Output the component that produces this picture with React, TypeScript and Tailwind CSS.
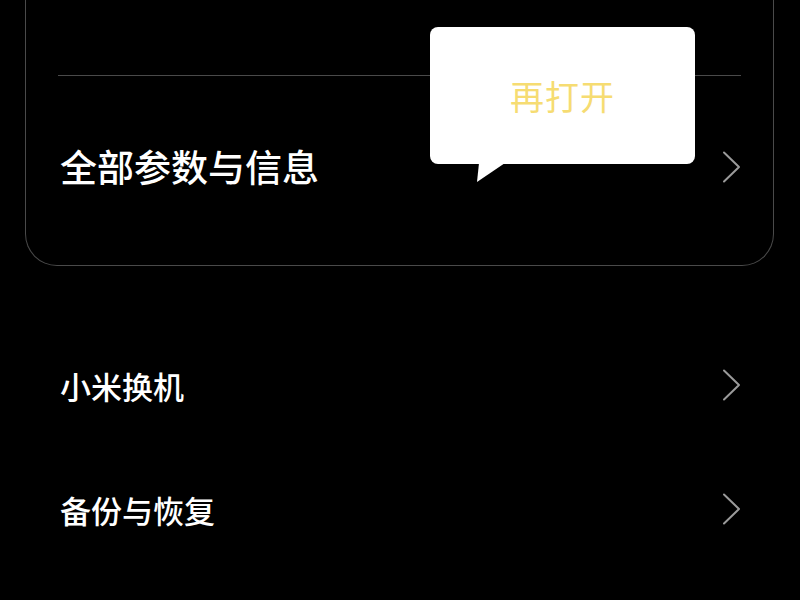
import React from 'react';

const FONT = { fontFamily: '"Noto Sans CJK SC", "Noto Sans", sans-serif' };

const Chevron = () => (
  <svg width="19" height="32" viewBox="0 0 19 32" className="shrink-0">
    <polyline points="2,1.5 17,16 2,30.5" fill="none" stroke="#9a9a9a" strokeWidth="2" strokeLinecap="round" strokeLinejoin="round" />
  </svg>
);

const ListRow = ({ label }: { label: string }) => (
  <div className="h-[124px] flex items-center justify-between pl-[60px] pr-[59px]">
    <span className="text-[31px] font-medium text-white leading-none">{label}</span>
    <Chevron />
  </div>
);

export default function App() {
  return (
    <div className="relative w-[800px] h-[600px] bg-black overflow-hidden" style={FONT}>
      {/* Card, top part runs off the screen */}
      <div className="ml-[25px] w-[749px] border border-t-0 border-[#4a4a4a] rounded-b-[32px]">
        <div className="h-[75px]" />
        <div className="mx-[32px] h-px bg-[#4a4a4a]" />
        <div className="h-[189px] flex items-center justify-between pl-[34px] pr-[32px] pb-[8px]">
          <span className="text-[37px] font-medium text-white leading-none">全部参数与信息</span>
          <Chevron />
        </div>
      </div>

      <div className="mt-[57px]">
        <ListRow label="小米换机" />
        <ListRow label="备份与恢复" />
      </div>

      {/* Tooltip bubble */}
      <div className="absolute left-[430px] top-[27px] w-[265px] h-[137px] bg-white rounded-[8px] flex items-center justify-center">
        <span className="text-[34px] text-[#f6dc72] leading-none tracking-[1px]">再打开</span>
        <svg width="30" height="20" viewBox="0 0 30 20" className="absolute left-[46px] top-[136px]">
          <polygon points="3,0 1,19 29,0" fill="#ffffff" />
        </svg>
      </div>
    </div>
  );
}
